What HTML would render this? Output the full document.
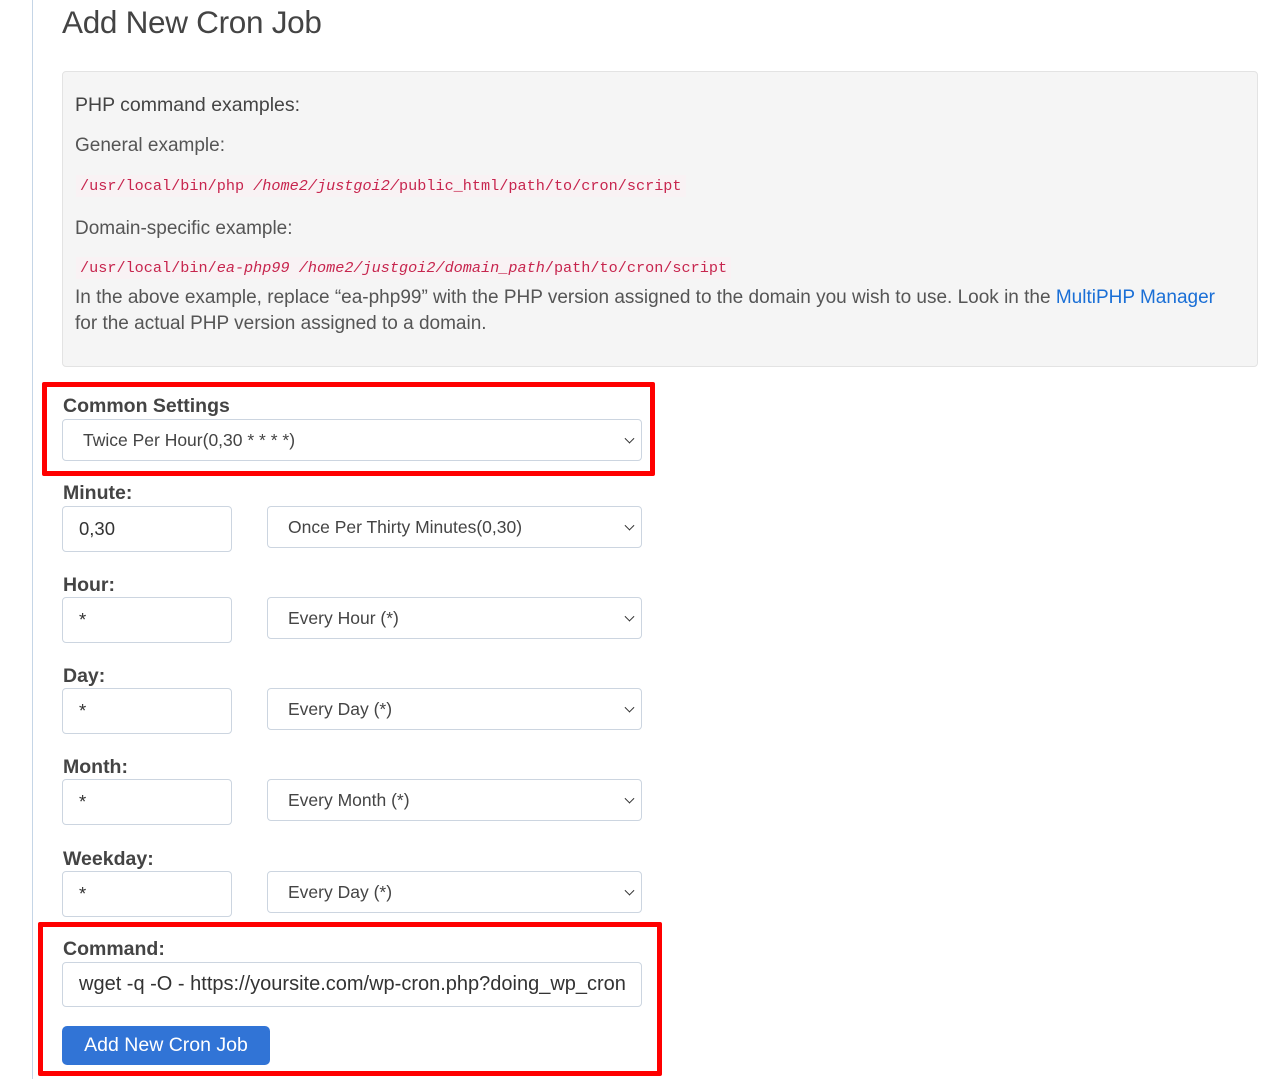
<!DOCTYPE html>
<html><head><style>
*{box-sizing:border-box;margin:0;padding:0}
body{width:1274px;height:1079px;background:#fff;position:relative;overflow:hidden;font-family:"Liberation Sans",sans-serif;color:#333}
.a{position:absolute}
.vl{left:32px;top:0;width:1px;height:1079px;background:#c5d5e6}
h1{position:absolute;left:62px;top:4px;font-weight:normal;font-size:31.5px;color:#444;letter-spacing:-0.3px}
.well{left:62px;top:71px;width:1196px;height:296px;background:#f5f5f5;border:1px solid #e3e3e3;border-radius:4px}
.t{font-size:19px;color:#555;white-space:nowrap}
.code{font-family:"Liberation Mono",monospace;font-size:15.2px;color:#c7254e;background:#f9f2f4;padding:2px 4px;white-space:nowrap}
.lbl{font-size:19.5px;font-weight:bold;color:#444;left:63px}
.inp{border:1px solid #ccd5e0;border-radius:4px;background:#fff;font-size:18.5px;color:#333;padding-left:16px;display:flex;align-items:center}
.sel{border:1px solid #ccd5e0;border-radius:4px;background:#fff;font-size:17.5px;color:#444;padding-left:20px;display:flex;align-items:center}
.sel::after{content:"";position:absolute;right:8px;top:50%;width:6px;height:6px;border-right:1.5px solid #333;border-bottom:1.5px solid #333;transform:translateY(-70%) rotate(45deg)}
.red{border:5px solid #f00;border-radius:2px}
</style></head><body>
<div class="a vl"></div>
<h1>Add New Cron Job</h1>
<div class="a well"></div>
<div class="a t" style="left:75px;top:94px;color:#444;font-size:19.5px">PHP command examples:</div>
<div class="a t" style="left:75px;top:135px">General example:</div>
<div class="a code" style="left:76px;top:175px">/usr/local/bin/php <i>/home2/justgoi2/</i>public_html/path/to/cron/script</div>
<div class="a t" style="left:75px;top:218px">Domain-specific example:</div>
<div class="a code" style="left:76px;top:257px">/usr/local/bin/<i>ea-php99 /home2/justgoi2/domain_path</i>/path/to/cron/script</div>
<div class="a t" style="left:75px;top:287px">In the above example, replace “ea-php99” with the PHP version assigned to the domain you wish to use. Look in the <span style="color:#1a6fd6">MultiPHP Manager</span></div>
<div class="a t" style="left:75px;top:313px">for the actual PHP version assigned to a domain.</div>

<div class="a red" style="left:42px;top:382px;width:613px;height:94px"></div>
<div class="a lbl" style="top:395px">Common Settings</div>
<div class="a sel" style="left:62px;top:419px;width:580px;height:42px">Twice Per Hour(0,30 * * * *)</div>

<div class="a lbl" style="top:482px">Minute:</div>
<div class="a inp" style="left:62px;top:506px;width:170px;height:46px">0,30</div>
<div class="a sel" style="left:267px;top:506px;width:375px;height:42px">Once Per Thirty Minutes(0,30)</div>

<div class="a lbl" style="top:574px">Hour:</div>
<div class="a inp" style="left:62px;top:597px;width:170px;height:46px">*</div>
<div class="a sel" style="left:267px;top:597px;width:375px;height:42px">Every Hour (*)</div>

<div class="a lbl" style="top:665px">Day:</div>
<div class="a inp" style="left:62px;top:688px;width:170px;height:46px">*</div>
<div class="a sel" style="left:267px;top:688px;width:375px;height:42px">Every Day (*)</div>

<div class="a lbl" style="top:756px">Month:</div>
<div class="a inp" style="left:62px;top:779px;width:170px;height:46px">*</div>
<div class="a sel" style="left:267px;top:779px;width:375px;height:42px">Every Month (*)</div>

<div class="a lbl" style="top:848px">Weekday:</div>
<div class="a inp" style="left:62px;top:871px;width:170px;height:46px">*</div>
<div class="a sel" style="left:267px;top:871px;width:375px;height:42px">Every Day (*)</div>

<div class="a red" style="left:38px;top:922px;width:624px;height:154px"></div>
<div class="a lbl" style="top:938px">Command:</div>
<div class="a inp" style="left:62px;top:962px;width:580px;height:45px;overflow:hidden;white-space:nowrap;font-size:20px;padding-right:16px"><span style="overflow:hidden;display:block;width:100%">wget -q -O - https://yoursite.com/wp-cron.php?doing_wp_cron</span></div>
<div class="a" style="left:62px;top:1026px;width:208px;height:39px;background:#3174d6;border-radius:5px;color:#fff;font-size:19.5px;display:flex;align-items:center;justify-content:center">Add New Cron Job</div>
</body></html>
